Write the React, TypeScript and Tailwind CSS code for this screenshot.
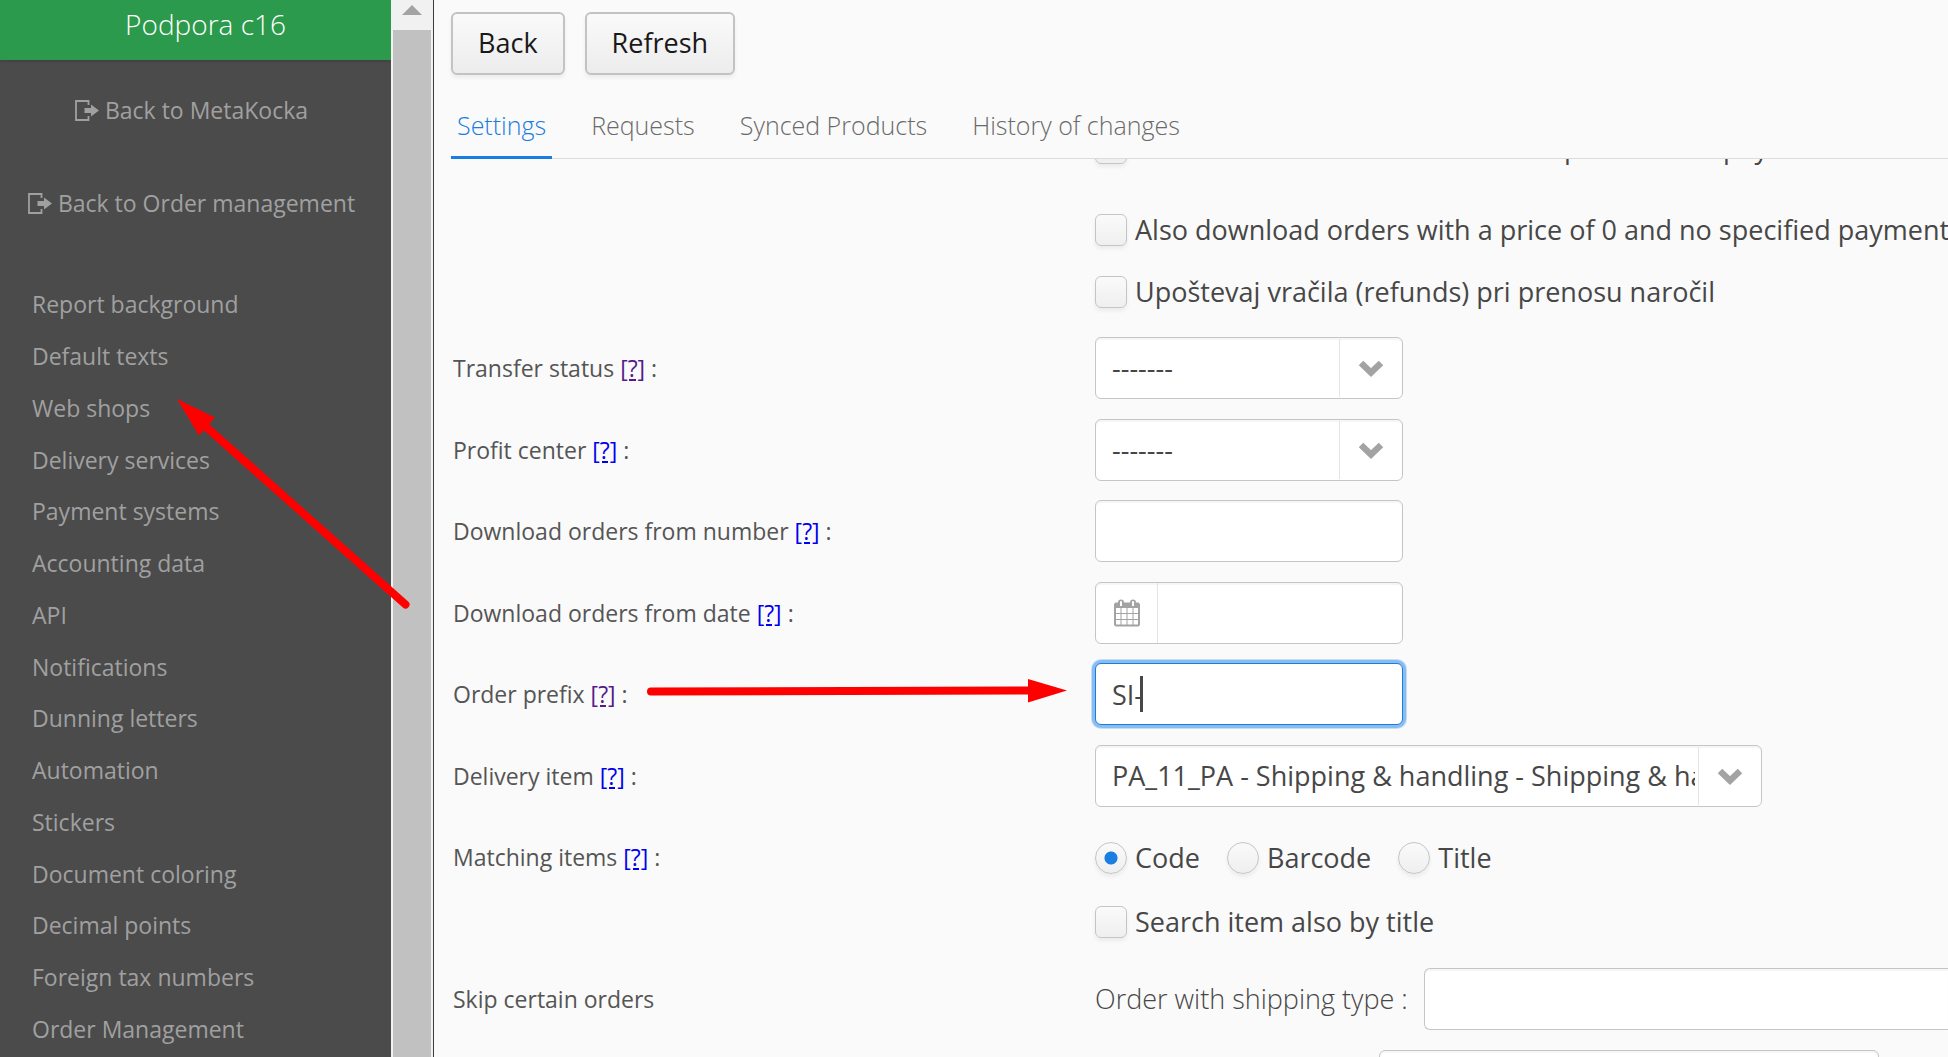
import React from "react";

const MENU = [
  "Report background",
  "Default texts",
  "Web shops",
  "Delivery services",
  "Payment systems",
  "Accounting data",
  "API",
  "Notifications",
  "Dunning letters",
  "Automation",
  "Stickers",
  "Document coloring",
  "Decimal points",
  "Foreign tax numbers",
  "Order Management",
];

const TABS = ["Settings", "Requests", "Synced Products", "History of changes"];

function ExitIcon() {
  return (
    <svg width="24" height="22" viewBox="0 0 24 22" className="shrink-0" aria-hidden="true">
      <path d="M13.500 5V1H1v19h12.500v-4" fill="none" stroke="currentColor" strokeWidth="1.800" />
      <path d="M9.500 8H16V4.500l8 6-8 6V13H9.500z" fill="currentColor" />
    </svg>
  );
}

function CalendarIcon() {
  return (
    <svg width="26" height="28" viewBox="0 0 26 28" aria-hidden="true">
      <path
        fillRule="evenodd"
        fill="currentColor"
        d="M1.500 3.500H4a3 3 0 0 1 6 0h6a3 3 0 0 1 6 0h2.500L26 5V26l-1.500 1.500h-23L0 26V5zM2 9v5h4.500V9zM7.500 9v5h5V9zM13.500 9v5h5V9zM19.500 9v5H24V9zM2 15v5h4.500v-5zM7.500 15v5h5v-5zM13.500 15v5h5v-5zM19.500 15v5H24v-5zM2 21v4.500h4.500V21zM7.500 21v4.500h5V21zM13.500 21v4.500h5V21zM19.500 21v4.500H24V21zM6 3v4h2V3a1 1 0 0 0-2 0zM18 3v4h2V3a1 1 0 0 0-2 0z"
      />
    </svg>
  );
}

const FIELD =
  "rounded-[6px] border border-[#c5c5c5] bg-white shadow-[inset_0_2px_1px_#f6f6f6] text-[27px] text-[#474747] outline-none";

function SelectBox({ id, value, wide }: { id: string; value: string; wide?: boolean }) {
  return (
    <div className={wide ? "relative w-[667px]" : "relative w-[308px]"}>
      <select id={id} className={FIELD + " block h-[62px] w-full appearance-none pl-4 pr-[66px]"}>
        <option>{value}</option>
      </select>
      <span className="pointer-events-none absolute inset-y-[2px] right-px flex w-[63px] items-center justify-center border-l border-[#e4e4e4] text-[#a3a3a3]">
        <svg width="26" height="18" viewBox="0 0 26 18" aria-hidden="true">
          <path d="M3 4l10 9.500L23 4" fill="none" stroke="currentColor" strokeWidth="6.500" />
        </svg>
      </span>
    </div>
  );
}

function Check({ label }: { label: string }) {
  return (
    <label className="flex h-[31px] items-center gap-2 whitespace-nowrap text-[27px] leading-[31px] text-[#474747]">
      <input
        type="checkbox"
        className="size-8 shrink-0 appearance-none rounded-[6px] border border-[#c5c5c5] bg-linear-to-b from-[#fafafa] to-[#efefef] shadow-[0_3px_4px_rgba(0,0,0,0.06)]"
      />
      {label}
    </label>
  );
}

function Radio({ label, checked }: { label: string; checked?: boolean }) {
  return (
    <label className="flex h-8 items-center gap-2 text-[27px] leading-8 text-[#474747]">
      <input
        type="radio"
        name="matching"
        defaultChecked={checked}
        className="size-8 shrink-0 appearance-none rounded-full border border-[#c5c5c5] bg-linear-to-b from-[#fafafa] to-[#efefef] shadow-[0_3px_4px_rgba(0,0,0,0.06)] checked:bg-[radial-gradient(circle,#197de1_6px,transparent_7px),linear-gradient(#fafafa,#efefef)]"
      />
      {label}
    </label>
  );
}

function Row({
  label,
  htmlFor,
  visited,
  children,
}: {
  label: string;
  htmlFor?: string;
  visited?: boolean;
  children: React.ReactNode;
}) {
  return (
    <div className="flex h-[82px] items-start even:h-[81px]">
      <div className="flex h-[62px] w-[642px] shrink-0 items-center text-[23px] text-[#555]">
        <span>
          <label htmlFor={htmlFor}>{label}</label>{" "}
          <a
            href="#help"
            className={visited ? "text-[#551a8b] underline" : "text-[#0000ee] underline"}
          >
            [?]
          </a>{" "}
          :
        </span>
      </div>
      {children}
    </div>
  );
}

export default function App() {
  return (
    <div className="relative flex h-screen overflow-hidden bg-[#fafafa] font-['Open_Sans',sans-serif]">
      <aside className="flex w-[391px] shrink-0 flex-col bg-[#4b4b4b] text-[23px] text-[#a0a0a0]">
        <header className="h-[60px] shrink-0 bg-[#2b9a4c] pl-5 text-center text-[28px] font-light leading-[48px] text-white shadow-[0_1px_3px_rgba(0,0,0,0.2)]">
          Podpora c16
        </header>
        <div className="pr-2 pt-1">
          <a href="#metakocka" className="flex h-[93px] items-center justify-center gap-[6px]">
            <ExitIcon />
            Back to MetaKocka
          </a>
          <a href="#orders" className="flex h-[93px] items-center justify-center gap-[6px]">
            <ExitIcon />
            Back to Order management
          </a>
        </div>
        <nav className="mt-[29px] pl-8">
          {MENU.map((m) => (
            <a key={m} href="#menu" className="flex h-[52px] items-center nth-[4n+1]:h-[51px]">
              {m}
            </a>
          ))}
        </nav>
      </aside>

      <div className="flex w-[43px] shrink-0 flex-col border-r border-[#3c3c3c] bg-[#f1f1f1] px-[2px]">
        <div className="flex h-[30px] shrink-0 justify-center pt-[5px]">
          <svg width="20" height="10" viewBox="0 0 20 10" aria-hidden="true">
            <path d="M10 0l10 10H0z" fill="#a3a3a3" />
          </svg>
        </div>
        <div className="flex-1 bg-[#c1c1c1]" />
      </div>

      <main className="flex min-w-0 flex-1 flex-col pl-[17px]">
        <div className="flex gap-5 pt-3">
          {["Back", "Refresh"].map((b) => (
            <button
              key={b}
              className="h-[63px] rounded-[6px] border-2 border-[#c3c3c3] bg-linear-to-b from-[#fafafa] to-[#ececec] px-[25px] text-[27px] text-[#191919] shadow-[0_3px_4px_rgba(0,0,0,0.06)]"
            >
              {b}
            </button>
          ))}
        </div>
        <div role="tablist" className="mt-6 flex h-[60px] shrink-0 gap-[33px] border-b border-[#dcdcdc]">
          {TABS.map((t, i) => (
            <button
              key={t}
              role="tab"
              aria-selected={i === 0}
              className={
                i === 0
                  ? "-mb-px border-b-[3px] border-[#197de1] px-[6px] pb-1 text-[25px] font-light text-[#197de1]"
                  : "-mb-px border-b-[3px] border-transparent px-[6px] pb-1 text-[25px] font-light text-[#6a6a6a]"
              }
            >
              {t}
            </button>
          ))}
        </div>

        <div className="min-h-0 flex-1 overflow-hidden">
          <div className="-mt-[27px]">
            <div className="flex flex-col pl-[644px]">
              <Check label="Also download orders with a total price but no payment" />
              <div className="mb-[31px] mt-[51px]">
                <Check label="Also download orders with a price of 0 and no specified payment" />
              </div>
              <Check label="Upoštevaj vračila (refunds) pri prenosu naročil" />
            </div>

            <div className="mt-[30px] pl-[2px]">
              <Row label="Transfer status" htmlFor="status" visited>
                <SelectBox id="status" value="-------" />
              </Row>
              <Row label="Profit center" htmlFor="center">
                <SelectBox id="center" value="-------" />
              </Row>
              <Row label="Download orders from number" htmlFor="number">
                <input id="number" className={FIELD + " h-[62px] w-[308px] px-4"} />
              </Row>
              <Row label="Download orders from date" htmlFor="date">
                <div className={FIELD + " flex h-[62px] w-[308px]"}>
                  <button
                    aria-label="Pick a date"
                    className="flex w-[62px] items-center justify-center border-r border-[#e4e4e4] text-[#a3a3a3]"
                  >
                    <CalendarIcon />
                  </button>
                  <input id="date" className="min-w-0 flex-1 px-4 outline-none" />
                </div>
              </Row>
              <Row label="Order prefix" htmlFor="prefix" visited>
                <div className="relative">
                  <input
                    id="prefix"
                    defaultValue="SI-"
                    className="block h-[62px] w-[308px] rounded-[6px] border border-[#197de1] bg-white px-4 text-[27px] text-[#474747] caret-transparent shadow-[0_0_0_3px_#8abdef,0_0_0_4px_#c5def6] outline-none"
                  />
                  <span className="absolute left-[45px] top-[13px] h-9 w-[3px] bg-[#474747]" />
                </div>
              </Row>
              <Row label="Delivery item" htmlFor="delivery">
                <SelectBox id="delivery" value="PA_11_PA - Shipping & handling - Shipping & handling" wide />
              </Row>
              <Row label="Matching items">
                <div className="flex flex-col gap-8 pt-4">
                  <div className="flex gap-[27px]">
                    <Radio label="Code" checked />
                    <Radio label="Barcode" />
                    <Radio label="Title" />
                  </div>
                  <Check label="Search item also by title" />
                </div>
              </Row>
            </div>

            <div className="mt-[60px] flex pl-[2px]">
              <div className="flex h-[62px] w-[642px] shrink-0 items-center text-[23px] text-[#555]">
                Skip certain orders
              </div>
              <div className="flex min-w-0 flex-1 flex-col gap-5">
                <div className="flex items-center gap-4">
                  <label
                    htmlFor="shipping"
                    className="whitespace-nowrap text-[27px] font-light text-[#474747]"
                  >
                    Order with shipping type :
                  </label>
                  <input
                    id="shipping"
                    className={FIELD + " h-[62px] min-w-0 flex-1 rounded-r-none border-r-0 px-4"}
                  />
                </div>
                <input
                  aria-label="Order value"
                  className={FIELD + " ml-[284px] h-[62px] w-[500px] px-4"}
                />
              </div>
            </div>
          </div>
        </div>
      </main>

      <svg
        className="pointer-events-none absolute left-0 top-0"
        width="1080"
        height="720"
        viewBox="0 0 1080 720"
        aria-hidden="true"
      >
        <g stroke="#f00" strokeWidth="8" strokeLinecap="round">
          <path d="M405.500 604.500L205 426" />
          <path d="M651 691.500L1030 690.500" />
        </g>
        <path d="M177 399l38 18.500-16 18zM1067 690.500l-39-11.500v23.500z" fill="#f00" />
      </svg>
    </div>
  );
}
